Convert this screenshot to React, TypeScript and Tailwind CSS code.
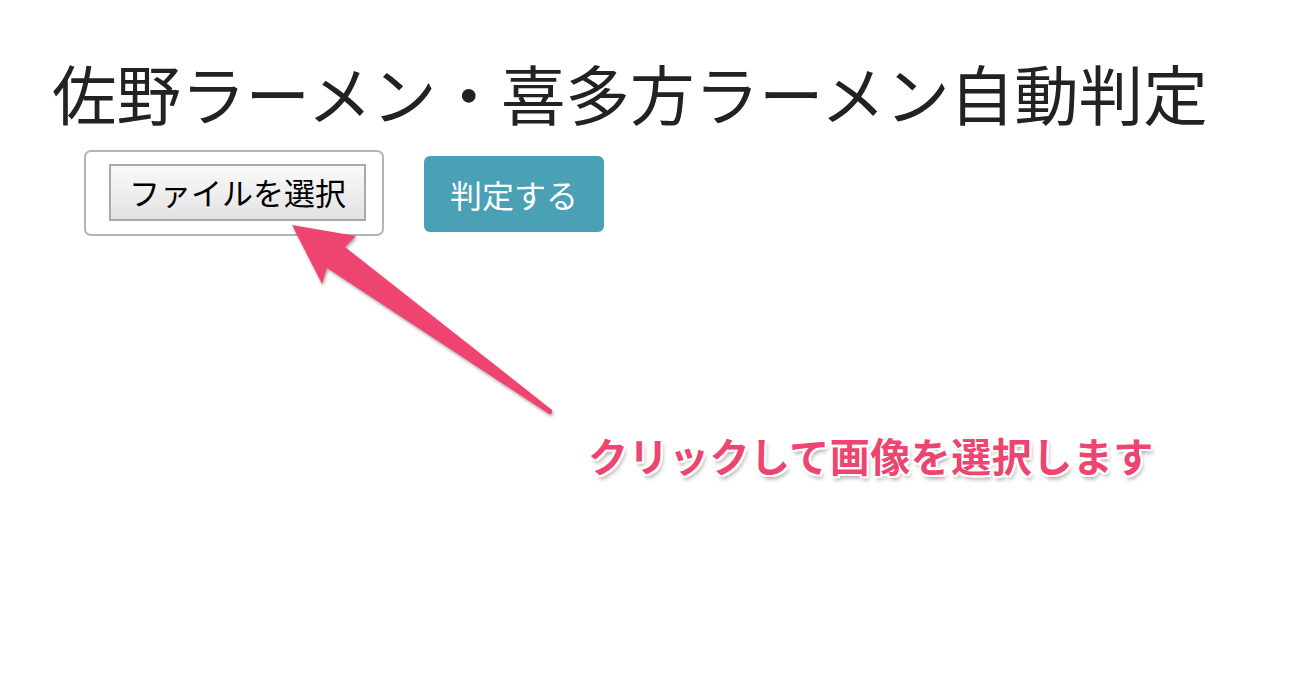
import React from "react";

const jp = "font-['Hiragino_Sans','Noto_Sans_CJK_JP',sans-serif]";

function Arrow() {
    return (
        <svg
            className="absolute left-0 top-0 pointer-events-none"
            width="1302"
            height="674"
            viewBox="0 0 1302 674"
        >
            <defs>
                <filter id="arrowShadow" x="-20%" y="-20%" width="140%" height="140%">
                    <feDropShadow dx="1" dy="2" stdDeviation="1.5" floodColor="#000" floodOpacity="0.35" />
                </filter>
            </defs>
            <path
                d="M292 225 L356 236 L345 247 L552 410 Q553 414 549 414 L327 268 L322 284 Z"
                fill="#ee4470"
                filter="url(#arrowShadow)"
            />
        </svg>
    );
}

export default function App() {
    return (
        <div className={`relative w-[1302px] h-[674px] bg-white overflow-hidden ${jp}`}>
            <div className="pl-[52px] pt-[52px]">
                <h1 className="text-[64.5px] leading-[80px] text-[#222] font-normal">
                    佐野ラーメン・喜多方ラーメン自動判定
                </h1>
                <div className="flex items-start gap-[40px] pl-[32px] mt-[18px]">
                    <div className="w-[300px] h-[86px] border-2 border-[#b4b4b4] rounded-[7px] pl-[23px] pt-[12px]">
                        <div className="w-[257px] h-[57px] border-2 border-[#a9a9a9] bg-gradient-to-b from-[#fafafa] to-[#e3e3e3] flex items-center justify-center text-[31px] text-black">
                            ファイルを選択
                        </div>
                    </div>
                    <button className="mt-[6px] w-[180px] h-[76px] bg-[#4aa0b5] rounded-[6px] text-white text-[32px] flex items-center justify-center">
                        判定する
                    </button>
                </div>
            </div>

            <Arrow />

            <div className="absolute left-[588px] top-[429px] text-[40px] leading-[52px] font-bold text-[#ee4470] tracking-[0.5px] [text-shadow:0_0_2px_#fff,2px_0_0_#fff,-2px_0_0_#fff,0_2px_0_#fff,0_-2px_0_#fff,2px_2px_0_#fff,-2px_-2px_0_#fff,2px_-2px_0_#fff,-2px_2px_0_#fff,2px_4px_4px_rgba(0,0,0,0.35)]">
                クリックして画像を選択します
            </div>
        </div>
    );
}
